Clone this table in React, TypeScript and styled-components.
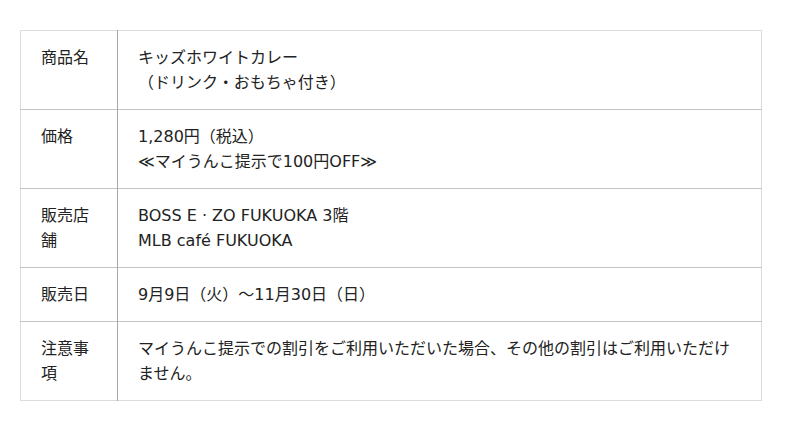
import styled, { createGlobalStyle } from 'styled-components';

const GlobalStyle = createGlobalStyle`
  body {
    margin: 0;
    background: #fff;
    font-family: 'DejaVu Sans', 'Noto Sans CJK JP', sans-serif;
    color: #222;
  }
`;

const rows: { label: string; lines: string[] }[] = [
  { label: '商品名', lines: ['キッズホワイトカレー', '（ドリンク・おもちゃ付き）'] },
  { label: '価格', lines: ['1,280円（税込）', '≪マイうんこ提示で100円OFF≫'] },
  { label: '販売店舗', lines: ['BOSS E · ZO FUKUOKA 3階', 'MLB café FUKUOKA'] },
  { label: '販売日', lines: ['9月9日（火）～11月30日（日）'] },
  {
    label: '注意事項',
    lines: ['マイうんこ提示での割引をご利用いただいた場合、その他の割引はご利用いただけません。'],
  },
];

export default function App() {
  return (
    <>
      <GlobalStyle />
      <Page>
        <Table>
          <tbody>
            {rows.map((row) => (
              <Row key={row.label}>
                <Head>{row.label}</Head>
                <Cell>
                  {row.lines.map((line) => (
                    <div key={line}>{line}</div>
                  ))}
                </Cell>
              </Row>
            ))}
          </tbody>
        </Table>
      </Page>
    </>
  );
}

// ROOT
const Page = styled.div`
  padding: 30px 38px 30px 20px;
`;

// TABLE
const Table = styled.table`
  width: 742px;
  border-collapse: collapse;
  border: 1px solid #dcdcdc;
  font-size: 16px;
  line-height: 25px;
`;

const Row = styled.tr`
  border-bottom: 1px solid #c4c4c4;

  &:last-child {
    border-bottom: 1px solid #dcdcdc;
  }
`;

const Head = styled.th`
  width: 97px;
  box-sizing: border-box;
  padding: 14px 20px;
  text-align: left;
  vertical-align: top;
  font-weight: normal;
  border-right: 1px solid #a8a8a8;
`;

const Cell = styled.td`
  padding: 14px 20px;
  vertical-align: top;
`;
